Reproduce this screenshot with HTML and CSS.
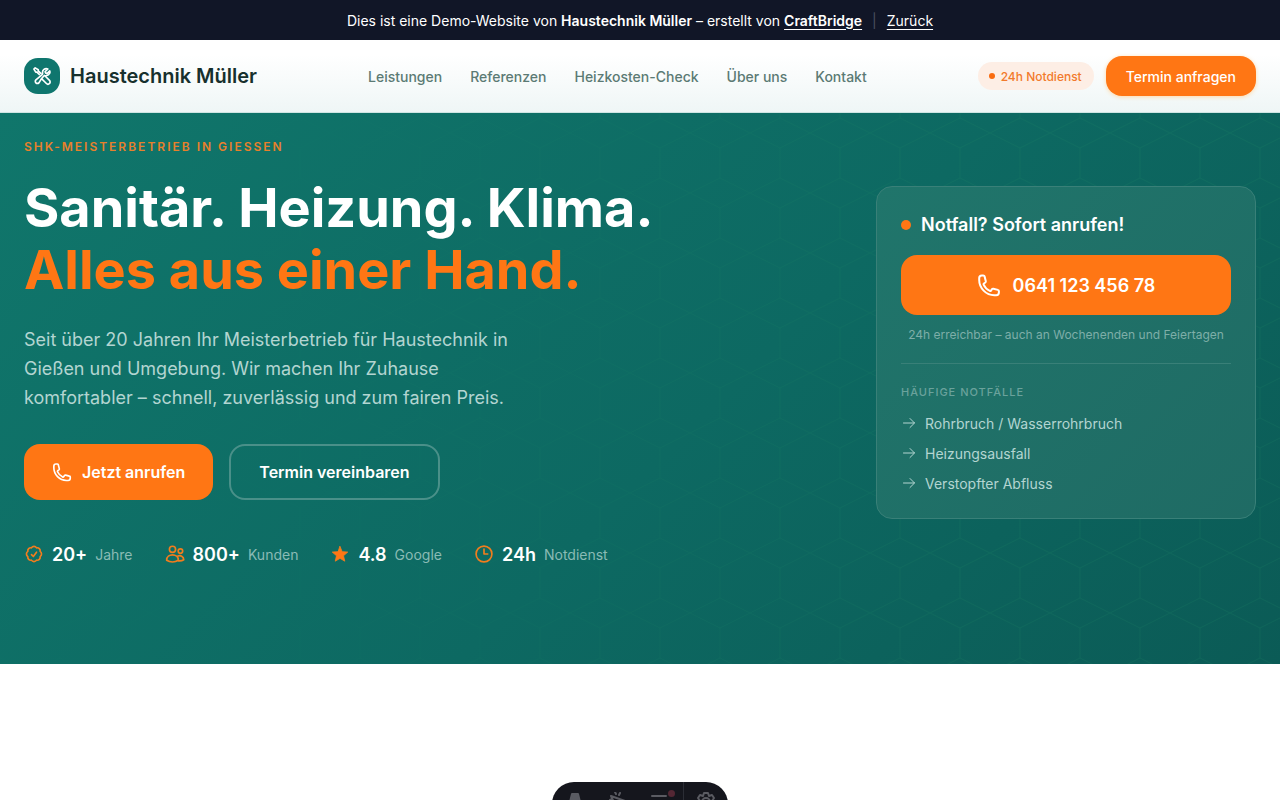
FILE: index.html
```html
<!DOCTYPE html>
<html lang="de">
<head>
    <meta charset="UTF-8">
    <meta name="viewport" content="width=device-width, initial-scale=1.0">
    <title>Haustechnik Müller - Sanitär, Heizung, Klima</title>
    <link rel="stylesheet" href="styles.css">
</head>
<body>
    <!-- Shared icons -->
    <svg class="icon-defs" aria-hidden="true">
        <symbol id="phone" viewBox="0 0 24 24">
            <path d="M2.200 5c0-1.500 1.200-2.600 2.600-2.600h1.500c.6 0 1.100.4 1.300 1l1.200 4.800c.1.500-.1 1-.5 1.300l-1.400 1c-.4.300-.5.8-.3 1.200a12.500 12.500 0 0 0 6.200 6.200c.4.2.9.1 1.200-.3l1-1.400c.3-.4.8-.6 1.300-.5l4.600 1.200c.6.1 1 .6 1 1.200v1.500c0 1.400-1.200 2.600-2.600 2.600h-2C9 22.200 2.200 15 2.200 7z"/>
        </symbol>
        <symbol id="arrow" viewBox="0 0 16 16">
            <path d="M2.500 8h11M9 3.500L13.500 8 9 12.500"/>
        </symbol>
    </svg>

    <div class="demo-bar">
        <span>Dies ist eine Demo-Website von <strong>Haustechnik Müller</strong> – erstellt von <a href="#"><strong>CraftBridge</strong></a></span>
        <span class="divider">|</span>
        <a href="#">Zurück</a>
    </div>

    <header class="header">
        <a href="#" class="logo">
            <span class="logo-icon">
                <svg class="icon" viewBox="0 0 24 24" aria-hidden="true">
                    <path d="M11.4 15.200L17.300 21a2.600 2.600 0 0 0 3.700-3.700l-5.900-5.900M11.400 15.200l2.500-3c.3-.4.7-.6 1.200-.8 1.800.5 4.700-.2 5.900-2.200.6-1 .7-2.200.3-3.300L18 9.200a3 3 0 0 1-2.300-2.300L19 3.600a4.500 4.500 0 0 0-6.300 4.900c.1.800-.1 1.700-.8 2.200l-7.200 5.900a2.500 2.500 0 1 0 3.600 3.600l3.100-5zM8.700 10.200L5.900 7.400H4.500L2.300 3.700l1.500-1.500L7.500 4.500v1.400l3 3"/>
                </svg>
            </span>
            Haustechnik Müller
        </a>
        <nav class="nav">
            <a href="#">Leistungen</a>
            <a href="#">Referenzen</a>
            <a href="#">Heizkosten-Check</a>
            <a href="#">Über uns</a>
            <a href="#">Kontakt</a>
        </nav>
        <div class="header-actions">
            <span class="badge">24h Notdienst</span>
            <a href="#" class="btn btn-small">Termin anfragen</a>
        </div>
    </header>

    <main class="hero">
        <svg class="hero-pattern" aria-hidden="true">
            <defs>
                <pattern id="hex" width="60" height="60" y="20" patternUnits="userSpaceOnUse">
                    <path d="M30 0l30 15v30L30 60 0 45V15z"/>
                </pattern>
            </defs>
            <rect width="100%" height="100%" fill="url(#hex)" stroke="none"/>
        </svg>

        <div class="hero-content">
            <p class="eyebrow">SHK-Meisterbetrieb in Giessen</p>
            <h1>Sanitär. Heizung. Klima.<br><span>Alles aus einer Hand.</span></h1>
            <p class="lead">Seit über 20 Jahren Ihr Meisterbetrieb für Haustechnik in Gießen und Umgebung. Wir machen Ihr Zuhause komfortabler – schnell, zuverlässig und zum fairen Preis.</p>
            <div class="hero-buttons">
                <a href="#" class="btn"><svg class="icon"><use href="#phone"/></svg>Jetzt anrufen</a>
                <a href="#" class="btn btn-outline">Termin vereinbaren</a>
            </div>
            <ul class="stats">
                <li>
                    <svg class="icon" viewBox="0 0 24 24" aria-hidden="true"><path d="M9 12.800l2.200 2.200L15 9.800M21 12c0 1.300-.6 2.400-1.600 3.100.2 1.200-.1 2.400-1 3.300s-2.100 1.200-3.300 1a3.700 3.700 0 0 1-6.200 0c-1.200.2-2.400-.1-3.300-1s-1.200-2.100-1-3.300a3.700 3.700 0 0 1 0-6.200c-.2-1.200.1-2.400 1-3.300s2.100-1.200 3.300-1a3.700 3.700 0 0 1 6.200 0c1.200-.2 2.400.1 3.300 1s1.200 2.100 1 3.300c1 .7 1.600 1.800 1.600 3.100z"/></svg>
                    <strong>20+</strong> Jahre
                </li>
                <li>
                    <svg class="icon" viewBox="0 0 24 24" aria-hidden="true"><circle cx="9" cy="6.400" r="3.700"/><circle cx="18.500" cy="8.500" r="2.700"/><path d="M2 19.500c0-8.500 14-8.500 14 0-4 2.500-10 2.500-14 0zM15 14.600c3.500-1.600 7.500.2 7.500 4.400-2 1.200-4 1.500-6.500 1.200"/></svg>
                    <strong>800+</strong> Kunden
                </li>
                <li>
                    <svg class="icon icon-star" viewBox="0 0 24 24" aria-hidden="true"><path d="M12 3l2.600 6.200 6.700.5-5.100 4.400 1.500 6.500L12 17.200l-5.700 3.400 1.500-6.500-5.100-4.400 6.700-.5z"/></svg>
                    <strong>4.8</strong> Google
                </li>
                <li>
                    <svg class="icon" viewBox="0 0 24 24" aria-hidden="true"><circle cx="12" cy="12" r="9.500"/><path d="M12 6v6h4.500"/></svg>
                    <strong>24h</strong> Notdienst
                </li>
            </ul>
        </div>

        <aside class="emergency">
            <h2>Notfall? Sofort anrufen!</h2>
            <a href="#" class="btn btn-call"><svg class="icon"><use href="#phone"/></svg>0641 123 456 78</a>
            <p class="note">24h erreichbar – auch an Wochenenden und Feiertagen</p>
            <h3>Häufige Notfälle</h3>
            <ul>
                <li><svg class="icon"><use href="#arrow"/></svg>Rohrbruch / Wasserrohrbruch</li>
                <li><svg class="icon"><use href="#arrow"/></svg>Heizungsausfall</li>
                <li><svg class="icon"><use href="#arrow"/></svg>Verstopfter Abfluss</li>
            </ul>
        </aside>
    </main>

    <!-- Floating toolbar -->
    <div class="toolbar">
        <button type="button" aria-label="Start"><svg class="icon" viewBox="0 0 20 20"><path class="solid" d="M8 2h6l4 16h-4l-1-4H9l-1 4H4z"/></svg></button>
        <button type="button" aria-label="Auswahl"><svg class="icon" viewBox="0 0 20 20"><path d="M3 4l14 5-6 2-2 6zM7 0l1 2M12 1l-1 2M2 8l2-1"/></svg></button>
        <button type="button" aria-label="Liste"><svg class="icon" viewBox="0 0 20 20"><path d="M1 4h14M1 11h16M1 17h16"/></svg><i class="dot"></i></button>
        <button type="button" class="settings" aria-label="Einstellungen"><svg class="icon" viewBox="0 0 20 20"><path d="M8 1h4l1 3 3-1 2 3-2 3v2l2 3-2 3-3-1-1 3H8l-1-3-3 1-2-3 2-3V9L2 6l2-3 3 1z"/><circle cx="10" cy="10" r="4"/></svg></button>
    </div>
</body>
</html>
```

FILE: styles.css
```css
/* General styles */
* {
    box-sizing: border-box;
}

body {
    margin: 0;
    font-family: Inter, sans-serif;
    background-color: #fff;
    color: #17302d;
}

a {
    color: inherit;
    text-decoration: none;
}

h1, h2, h3, p, ul {
    margin: 0;
    padding: 0;
}

ul {
    list-style: none;
}

.icon-defs {
    display: none;
}

.icon {
    width: 20px;
    height: 20px;
    flex: none;
    fill: none;
    stroke: currentColor;
    stroke-width: 2;
    stroke-linecap: round;
    stroke-linejoin: round;
}

/* Demo bar */
.demo-bar {
    display: flex;
    justify-content: center;
    align-items: center;
    gap: 10px;
    height: 40px;
    background-color: #111627;
    color: #fff;
    font-size: 14px;
}

.demo-bar strong {
    font-weight: 600;
}

.demo-bar a {
    text-decoration: underline;
    text-underline-offset: 3px;
}

.demo-bar .divider {
    color: #4b5160;
}

/* Header */
.header {
    display: flex;
    justify-content: space-between;
    align-items: center;
    padding: 16px 24px;
    background: linear-gradient(#fff 20%, #eff6f6);
    border-bottom: 1px solid #cfe5e3;
}

.logo {
    display: flex;
    align-items: center;
    gap: 10px;
    font-size: 20px;
    font-weight: 600;
}

.logo-icon {
    display: flex;
    align-items: center;
    justify-content: center;
    width: 36px;
    height: 36px;
    border-radius: 14px;
    background-color: #0f766e;
    color: #fff;
}

.nav {
    display: flex;
    gap: 28px;
    color: #5b7a74;
    font-size: 14px;
    font-weight: 500;
}

.header-actions {
    display: flex;
    align-items: center;
    gap: 12px;
}

.badge {
    display: flex;
    align-items: center;
    gap: 6px;
    height: 28px;
    padding: 0 12px 0 11px;
    border-radius: 14px;
    background-color: #fdeee5;
    color: #f27a2c;
    font-size: 12px;
    font-weight: 500;
}

.badge::before {
    content: "";
    width: 6px;
    height: 6px;
    border-radius: 50%;
    background-color: #f96c10;
}

.btn {
    display: flex;
    align-items: center;
    justify-content: center;
    gap: 10px;
    height: 56px;
    padding: 0 28px;
    border-radius: 16px;
    background-color: #ff7614;
    color: #fff;
    font-size: 16px;
    font-weight: 600;
}

.btn-small {
    height: 40px;
    padding: 0 20px;
    font-size: 14px;
    font-weight: 500;
    box-shadow: 0 1px 4px #ffd9a8;
}

.btn-outline {
    border: 2px solid #4a9089;
    background-color: transparent;
}

/* Hero */
.hero {
    position: relative;
    display: flex;
    justify-content: space-between;
    align-items: flex-start;
    gap: 48px;
    padding: 24px 24px 96px;
    background: linear-gradient(135deg, #10766b 0%, #0d6962 55%, #0b5b56 100%);
    color: #fff;
}

.hero-pattern {
    position: absolute;
    inset: 0;
    width: 100%;
    height: 100%;
    fill: none;
    stroke: #259068;
    opacity: 0.18;
    mask-image: linear-gradient(90deg, rgba(0, 0, 0, 0.2) 20%, #000 80%);
}

.hero-content {
    position: relative;
}

.eyebrow {
    color: #e8802b;
    font-size: 12px;
    line-height: 20px;
    font-weight: 600;
    letter-spacing: 2px;
    text-transform: uppercase;
}

h1 {
    margin-top: 20px;
    font-size: 54px;
    line-height: 62px;
    font-weight: 700;
}

h1 span {
    color: #ff7614;
}

.lead {
    max-width: 520px;
    margin-top: 24px;
    color: #b3d5d1;
    font-size: 18px;
    line-height: 29px;
}

.hero-buttons {
    display: flex;
    gap: 16px;
    margin-top: 32px;
}

.stats {
    display: flex;
    gap: 32px;
    margin-top: 40px;
}

.stats li {
    display: flex;
    align-items: center;
    gap: 8px;
    height: 28px;
    color: #8abbb5;
    font-size: 14px;
}

.stats strong {
    color: #fff;
    font-size: 18px;
    font-weight: 600;
}

.stats .icon {
    color: #f27d1d;
}

.stats .icon-star {
    fill: #ff7614;
    stroke-width: 1;
}

/* Emergency card */
.emergency {
    position: relative;
    width: 380px;
    margin-top: 49px;
    padding: 24px 24px 20px;
    border: 1px solid #398078;
    border-radius: 16px;
    background: linear-gradient(135deg, #20756b, #1f6b64);
}

.emergency h2 {
    display: flex;
    align-items: center;
    gap: 10px;
    font-size: 18px;
    line-height: 28px;
    font-weight: 600;
}

.emergency h2::before {
    content: "";
    width: 10px;
    height: 10px;
    border-radius: 50%;
    background-color: #ff7614;
}

.btn-call {
    height: 60px;
    margin-top: 16px;
    gap: 12px;
    font-size: 18px;
}

.btn-call .icon {
    width: 24px;
    height: 24px;
}

.note {
    margin-top: 10px;
    padding-bottom: 18px;
    border-bottom: 1px solid #398078;
    color: #7eaea8;
    font-size: 12px;
    line-height: 20px;
    text-align: center;
}

.emergency h3 {
    margin-top: 20px;
    color: #6ba29c;
    font-size: 11px;
    line-height: 16px;
    font-weight: 500;
    letter-spacing: 1px;
    text-transform: uppercase;
}

.emergency li {
    display: flex;
    align-items: center;
    gap: 8px;
    height: 30px;
    color: #b3d5d1;
    font-size: 14px;
}

.emergency ul {
    margin-top: 8px;
}

.emergency li .icon {
    width: 16px;
    height: 16px;
    stroke-width: 1;
}

/* Floating toolbar, partly below the fold */
.toolbar {
    position: fixed;
    bottom: -26px;
    left: 50%;
    display: flex;
    width: 176px;
    height: 44px;
    transform: translateX(-50%);
    border-radius: 22px;
    background-color: #15161d;
}

.toolbar button {
    position: relative;
    display: flex;
    justify-content: center;
    align-items: flex-start;
    flex: 1;
    padding: 10px 0 0;
    border: none;
    background: none;
    color: #5a5b62;
}

.toolbar .settings {
    border-left: 1px solid #2b2d35;
}

.toolbar .solid {
    fill: currentColor;
}

.toolbar .dot {
    position: absolute;
    top: 8px;
    right: 8px;
    width: 7px;
    height: 7px;
    border-radius: 50%;
    background-color: #542734;
}
```
